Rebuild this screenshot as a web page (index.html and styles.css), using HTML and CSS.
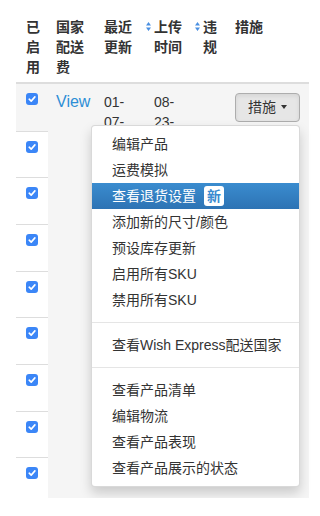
FILE: index.html
```html
<!DOCTYPE html>
<html lang="zh">
<head>
<meta charset="utf-8">
<link rel="stylesheet" href="styles.css">
</head>
<body>
<div class="wrap">
<table class="grid">
  <colgroup>
    <col class="c1"><col class="c2"><col class="c3"><col class="c4"><col class="c5"><col class="c6">
  </colgroup>
  <thead>
    <tr>
      <th class="h-first">已启用</th>
      <th>国家配送费</th>
      <th>最近更新</th>
      <th class="sortable"><span class="sort"><svg width="5" height="9" viewBox="0 0 5 9"><path d="M2.5 0 L5 3.4 L0 3.4 Z M2.5 9 L5 5.6 L0 5.6 Z" fill="#4a90e2"/></svg></span>上传时间</th>
      <th class="sortable"><span class="sort"><svg width="5" height="9" viewBox="0 0 5 9"><path d="M2.5 0 L5 3.4 L0 3.4 Z M2.5 9 L5 5.6 L0 5.6 Z" fill="#4a90e2"/></svg></span>违规</th>
      <th>措施</th>
    </tr>
  </thead>
  <tbody>
    <tr class="row r-first">
      <td class="cb"><span class="check"><svg width="12" height="12" viewBox="0 0 12 12"><path d="M3.2 6.2 L5.2 8.1 L8.9 3.9" fill="none" stroke="#fff" stroke-width="1.6" stroke-linecap="round" stroke-linejoin="round"/></svg></span></td>
      <td class="txt"><a class="link">View</a></td>
      <td class="txt"><div class="date">01-07-2019</div></td>
      <td class="txt pad16"><div class="date">08-23-2018</div></td>
      <td class="txt pad16"></td>
      <td class="act">
        <div class="btn-group">
          <button class="btn">措施<span class="caret"></span></button>
          <ul class="menu">
            <li>编辑产品</li>
            <li>运费模拟</li>
            <li class="active">查看退货设置<span class="badge">新</span></li>
            <li>添加新的尺寸/颜色</li>
            <li>预设库存更新</li>
            <li>启用所有SKU</li>
            <li>禁用所有SKU</li>
            <li class="divider"></li>
            <li>查看Wish Express配送国家</li>
            <li class="divider"></li>
            <li>查看产品清单</li>
            <li>编辑物流</li>
            <li>查看产品表现</li>
            <li>查看产品展示的状态</li>
          </ul>
        </div>
      </td>
    </tr>
    <tr class="row"><td class="cb"><span class="check"><svg width="12" height="12" viewBox="0 0 12 12"><path d="M3.2 6.2 L5.2 8.1 L8.9 3.9" fill="none" stroke="#fff" stroke-width="1.6" stroke-linecap="round" stroke-linejoin="round"/></svg></span></td><td class="shade" colspan="5"></td></tr>
    <tr class="row"><td class="cb"><span class="check"><svg width="12" height="12" viewBox="0 0 12 12"><path d="M3.2 6.2 L5.2 8.1 L8.9 3.9" fill="none" stroke="#fff" stroke-width="1.6" stroke-linecap="round" stroke-linejoin="round"/></svg></span></td><td class="shade" colspan="5"></td></tr>
    <tr class="row"><td class="cb"><span class="check"><svg width="12" height="12" viewBox="0 0 12 12"><path d="M3.2 6.2 L5.2 8.1 L8.9 3.9" fill="none" stroke="#fff" stroke-width="1.6" stroke-linecap="round" stroke-linejoin="round"/></svg></span></td><td class="shade" colspan="5"></td></tr>
    <tr class="row"><td class="cb"><span class="check"><svg width="12" height="12" viewBox="0 0 12 12"><path d="M3.2 6.2 L5.2 8.1 L8.9 3.9" fill="none" stroke="#fff" stroke-width="1.6" stroke-linecap="round" stroke-linejoin="round"/></svg></span></td><td class="shade" colspan="5"></td></tr>
    <tr class="row"><td class="cb"><span class="check"><svg width="12" height="12" viewBox="0 0 12 12"><path d="M3.2 6.2 L5.2 8.1 L8.9 3.9" fill="none" stroke="#fff" stroke-width="1.6" stroke-linecap="round" stroke-linejoin="round"/></svg></span></td><td class="shade" colspan="5"></td></tr>
    <tr class="row"><td class="cb"><span class="check"><svg width="12" height="12" viewBox="0 0 12 12"><path d="M3.2 6.2 L5.2 8.1 L8.9 3.9" fill="none" stroke="#fff" stroke-width="1.6" stroke-linecap="round" stroke-linejoin="round"/></svg></span></td><td class="shade" colspan="5"></td></tr>
    <tr class="row"><td class="cb"><span class="check"><svg width="12" height="12" viewBox="0 0 12 12"><path d="M3.2 6.2 L5.2 8.1 L8.9 3.9" fill="none" stroke="#fff" stroke-width="1.6" stroke-linecap="round" stroke-linejoin="round"/></svg></span></td><td class="shade" colspan="5"></td></tr>
    <tr class="row r-last"><td class="cb nob"><span class="check"><svg width="12" height="12" viewBox="0 0 12 12"><path d="M3.2 6.2 L5.2 8.1 L8.9 3.9" fill="none" stroke="#fff" stroke-width="1.6" stroke-linecap="round" stroke-linejoin="round"/></svg></span></td><td class="shade" colspan="5"></td></tr>
  </tbody>
</table>
</div>
</body>
</html>
```

FILE: styles.css
```css
* { box-sizing: border-box; }
html, body { margin: 0; padding: 0; background: #fff; }
body {
  font-family: "Liberation Sans", "Noto Sans CJK SC", sans-serif;
  font-size: 14px;
  line-height: 20px;
  color: #333;
}
.wrap { padding: 9px 11px 0 16px; }
.grid {
  width: 293px;
  table-layout: fixed;
  border-collapse: separate;
  border-spacing: 0;
}
.c1 { width: 32px; }
.c2 { width: 48px; }
.c3 { width: 42px; }
.c4 { width: 49px; }
.c5 { width: 40px; }
.c6 { width: 82px; }

th {
  text-align: left;
  vertical-align: top;
  font-weight: bold;
  padding: 8px 4px 5px 8px;
  border-bottom: 2px solid #ddd;
  line-height: 20px;
  position: relative;
}
th.h-first { padding-left: 10px; }
th.sortable { padding-left: 16px; }
.sort {
  position: absolute;
  left: 8px;
  top: 13px;
  width: 5px;
  height: 9px;
  display: block;
}
.sort svg { display: block; }

.row { height: 46.67px; }
.r-first { height: 47.7px; }
.r-last { height: 40px; }
td {
  vertical-align: top;
  padding: 0;
}
.r-first td { background: #f5f5f5; }
td.cb {
  padding: 9px 0 0 10px;
  border-bottom: 1px solid #ddd;
}
td.cb.nob { border-bottom: 0; }
td.shade { background: #f5f5f5; }
.check {
  display: block;
  width: 12px;
  height: 12px;
  border-radius: 3px;
  background: #3b86f7;
}
.check svg { display: block; }

td.txt { padding: 8px 4px 0 8px; }
td.txt.pad16 { padding-left: 16px; padding-right: 2px; }
.link {
  color: #2d8ed6;
  font-size: 16px;
  text-decoration: none;
}
.date { height: 34px; overflow: hidden; }

td.act { padding: 9px 0 0 8px; }
.btn-group { position: relative; display: inline-block; }
.btn {
  display: inline-flex;
  align-items: center;
  font-family: inherit;
  font-size: 14px;
  line-height: 20px;
  color: #333;
  background: #e6e6e6;
  border: 1px solid #adadad;
  border-radius: 4px;
  padding: 3px 12px 4px 12px;
  height: 29px;
  width: 65px;
  box-shadow: inset 0 2px 4px rgba(0,0,0,.08);
}
.caret {
  display: inline-block;
  width: 0;
  height: 0;
  margin-left: 5px;
  border-top: 4px solid #333;
  border-left: 3.5px solid transparent;
  border-right: 3.5px solid transparent;
}
.menu {
  position: absolute;
  top: 100%;
  right: 0;
  margin: 3px 0 0 0;
  padding: 5px 0;
  width: 209px;
  list-style: none;
  background: #fff;
  border: 1px solid rgba(0,0,0,.15);
  border-radius: 4px;
  box-shadow: 0 6px 12px rgba(0,0,0,.175);
  z-index: 10;
}
.menu li {
  padding: 3px 20px;
  line-height: 20px;
  white-space: nowrap;
  color: #333;
}
.menu li.active {
  color: #fff;
  background: linear-gradient(#3a8ccf, #2d73b4);
}
.menu li.divider {
  padding: 0;
  height: 1px;
  margin: 9px 0;
  background: #e5e5e5;
}
.badge {
  display: inline-block;
  margin-left: 8px;
  width: 20px;
  height: 20px;
  line-height: 20px;
  text-align: center;
  background: #fff;
  color: #3a8bd0;
  border-radius: 3px;
  font-weight: bold;
  vertical-align: top;
}
```
